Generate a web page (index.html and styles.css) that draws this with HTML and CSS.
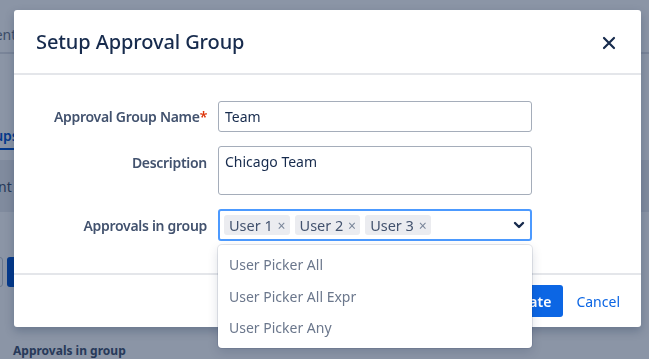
FILE: index.html
```html
<!DOCTYPE html>
<html lang="en">
<head>
  <meta charset="UTF-8" />
  <title>Setup Approval Group</title>
  <link rel="stylesheet" href="styles.css">
</head>
<body>

<!-- page behind the dialog -->
<div class="page">
  <div class="page-top"><span>Management</span><span>Manager</span></div>
  <div class="page-tabs"><span class="tab active">Approval Groups</span></div>
  <div class="page-band"><span>Component</span><span>Manager</span></div>
  <div class="page-actions">
    <button class="ghost">Edit</button>
    <button class="primary">Add</button>
  </div>
  <div class="page-heading">Approvals in group</div>
</div>

<div class="blanket"></div>

<div class="modal">
  <div class="modal-header">
    <h2>Setup Approval Group</h2>
    <span class="close">
      <svg width="14" height="14" viewBox="0 0 14 14"><path d="M2 2 L12 12 M12 2 L2 12" stroke="#172b4d" stroke-width="2.2" stroke-linecap="round"/></svg>
    </span>
  </div>

  <form class="modal-body">
    <label class="field-label">Approval Group Name<span class="req">*</span></label>
    <input class="text-input" type="text" value="Team">

    <label class="field-label">Description</label>
    <textarea class="text-area">Chicago Team</textarea>

    <label class="field-label">Approvals in group</label>
    <div class="select-wrap">
      <div class="multi-select">
        <span class="tag">User 1 <i>×</i></span>
        <span class="tag">User 2 <i>×</i></span>
        <span class="tag">User 3 <i>×</i></span>
        <span class="chevron">
          <svg width="12" height="8" viewBox="0 0 12 8"><path d="M2 2 L6 6 L10 2" fill="none" stroke="#172b4d" stroke-width="2.4" stroke-linecap="round" stroke-linejoin="round"/></svg>
        </span>
      </div>
      <ul class="menu">
        <li>User Picker All</li>
        <li>User Picker All Expr</li>
        <li>User Picker Any</li>
      </ul>
    </div>
  </form>

  <div class="modal-footer">
    <button class="btn-primary">Create</button>
    <button class="btn-link">Cancel</button>
  </div>
</div>

</body>
</html>
```

FILE: styles.css
```css
body {
  margin: 0;
  font-family: 'Noto Sans', 'Open Sans', sans-serif;
  font-size: 14px;
  color: #172b4d;
  background: #ffffff;
  overflow: hidden;
}
.page {
  width: 649px;
  height: 359px;
  overflow: hidden;
}
.page-top {
  height: 44px;
  padding-bottom: 8px;
  border-bottom: 2px solid #dfe1e6;
  display: flex;
  justify-content: space-between;
  align-items: flex-end;
  margin-left: -72px;
  margin-right: -60px;
  color: #6b778c;
}
.page-tabs {
  height: 96px;
  display: flex;
  align-items: flex-end;
  margin-left: -95px;
}
.tab {
  color: #0052cc;
  font-weight: 600;
  padding-bottom: 3px;
  border-bottom: 2px solid #0052cc;
}
.page-band {
  margin-top: 10px;
  height: 52px;
  background: #ebecf0;
  display: flex;
  justify-content: space-between;
  align-items: center;
  margin-left: -66px;
  margin-right: -64px;
  color: #42526e;
}
.page-actions {
  margin-top: 45px;
  display: flex;
  gap: 4px;
  margin-left: -40px;
}
.page-actions button {
  height: 30px;
  border-radius: 3px;
  font-family: inherit;
  font-size: 14px;
  width: 43px;
}
.ghost {
  background: #ffffff;
  border: 1px solid #c1c7d0;
}
.primary {
  background: #0052cc;
  border: none;
  color: #fff;
}
.page-heading {
  margin-top: 55px;
  margin-left: 13px;
  font-weight: 700;
  font-size: 12px;
  color: #42526e;
}

.blanket {
  position: fixed;
  inset: 0;
  background: rgba(9, 30, 66, 0.47);
}

.modal {
  position: absolute;
  left: 14px;
  top: 10px;
  width: 627px;
  height: 317px;
  background: #ffffff;
  border-radius: 3px;
  box-shadow: 0 4px 10px rgba(9, 30, 66, 0.25);
  display: flex;
  flex-direction: column;
}
.modal-header {
  height: 63px;
  border-bottom: 2px solid #e4e6ea;
  display: flex;
  align-items: center;
  justify-content: space-between;
  padding: 0 25px 0 22px;
}
.modal-header h2 {
  margin: 0;
  font-size: 20px;
  font-weight: 500;
  color: #172b4d;
  letter-spacing: -0.1px;
}
.close {
  display: flex;
  margin-top: 2px;
}

.modal-body {
  flex: 1;
  display: grid;
  grid-template-columns: 193px 314px;
  column-gap: 11px;
  row-gap: 14px;
  align-items: center;
  align-content: start;
  padding-top: 26px;
}
.field-label {
  text-align: right;
  font-weight: 600;
  color: #42526e;
  letter-spacing: -0.3px;
}
.req {
  color: #de350b;
}
.text-input,
.text-area {
  box-sizing: border-box;
  width: 314px;
  border: 1px solid #a5adba;
  border-radius: 3px;
  font-family: inherit;
  font-size: 14px;
  color: #172b4d;
  padding: 4px 6px;
  margin: 0;
}
.text-input {
  height: 31px;
}
.text-area {
  height: 49px;
  resize: none;
  padding-top: 5px;
}
.field-label:nth-of-type(2) {
  align-self: start;
  padding-top: 7px;
}
.select-wrap {
  position: relative;
}
.multi-select {
  box-sizing: border-box;
  height: 32px;
  border: 2px solid #4c9aff;
  border-radius: 3px;
  display: flex;
  align-items: center;
  gap: 5px;
  padding: 0 4px;
}
.tag {
  background: #ebecf0;
  color: #42526e;
  border-radius: 3px;
  height: 20px;
  line-height: 20px;
  padding: 0 4px 0 5px;
  font-size: 14.5px;
}
.tag i {
  font-style: normal;
  color: #7a869a;
  font-size: 14px;
  margin-left: 1px;
}
.chevron {
  margin-left: auto;
  display: flex;
  padding-right: 1px;
}
.menu {
  position: absolute;
  left: 0;
  top: 36px;
  width: 314px;
  box-sizing: border-box;
  margin: 0;
  padding: 4px 0;
  list-style: none;
  background: #ffffff;
  border-radius: 4px;
  box-shadow: 0 0 0 1px rgba(9, 30, 66, 0.1), 0 4px 11px rgba(9, 30, 66, 0.15);
  z-index: 2;
}
.menu li {
  height: 31.5px;
  line-height: 31.5px;
  padding: 0 11px;
  color: #6b778c;
}

.modal-footer {
  height: 52px;
  border-top: 2px solid #e4e6ea;
  display: flex;
  justify-content: flex-end;
  align-items: center;
  gap: 6px;
  padding-right: 14px;
}
.btn-primary {
  height: 32px;
  background: #0c66e4;
  color: #ffffff;
  border: none;
  border-radius: 3px;
  font-family: inherit;
  font-size: 14px;
  font-weight: 600;
  padding: 0 12px;
}
.btn-link {
  height: 32px;
  background: none;
  border: none;
  color: #0c66e4;
  font-family: inherit;
  font-size: 14px;
  padding: 0 7px;
}
```
